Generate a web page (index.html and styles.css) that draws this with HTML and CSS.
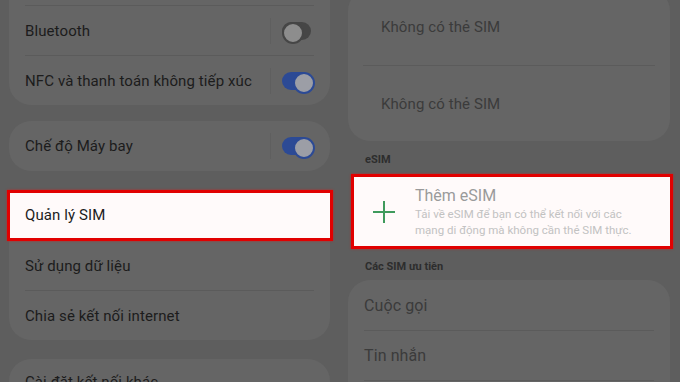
FILE: index.html
```html
<!DOCTYPE html>
<html lang="vi">
<head>
<meta charset="UTF-8">
<meta name="viewport" content="width=device-width, initial-scale=1.0">
<title>Quản lý SIM</title>
<link rel="stylesheet" href="styles.css">
</head>
<body>
    <div class="screens">

        <section class="screen screen-left">
            <div class="list list-left">
                <div class="card">
                    <div class="row">
                        <span class="label"></span>
                        <div class="switch-wrap"><span class="switch on"></span></div>
                    </div>
                    <div class="row">
                        <span class="label">Bluetooth</span>
                        <div class="switch-wrap"><span class="switch"></span></div>
                    </div>
                    <div class="row">
                        <span class="label">NFC và thanh toán không tiếp xúc</span>
                        <div class="switch-wrap"><span class="switch on"></span></div>
                    </div>
                </div>

                <div class="card">
                    <div class="row">
                        <span class="label">Chế độ Máy bay</span>
                        <div class="switch-wrap"><span class="switch on"></span></div>
                    </div>
                </div>

                <div class="card">
                    <div class="row highlight highlight-left">
                        <span class="label">Quản lý SIM</span>
                    </div>
                    <div class="row">
                        <span class="label">Sử dụng dữ liệu</span>
                    </div>
                    <div class="row">
                        <span class="label">Chia sẻ kết nối internet</span>
                    </div>
                </div>

                <div class="card">
                    <div class="row row-last">
                        <span class="label">Cài đặt kết nối khác</span>
                    </div>
                </div>
            </div>
        </section>

        <section class="screen screen-right">
            <div class="list list-right">
                <div class="card">
                    <div class="row row-sim">
                        <span class="label">Không có thẻ SIM</span>
                    </div>
                    <div class="row row-sim">
                        <span class="label">Không có thẻ SIM</span>
                    </div>
                </div>

                <h3 class="section-title section-esim">eSIM</h3>

                <div class="card card-esim highlight highlight-right">
                    <svg class="plus" width="22" height="22" viewBox="0 0 22 22">
                        <path d="M11 0v22M0 11h22" stroke="#3f9a5c" stroke-width="2" fill="none"/>
                    </svg>
                    <div class="esim-text">
                        <div class="esim-title">Thêm eSIM</div>
                        <div class="esim-desc">Tải về eSIM để bạn có thể kết nối với các mạng di động mà không cần thẻ SIM thực.</div>
                    </div>
                </div>

                <h3 class="section-title section-pref">Các SIM ưu tiên</h3>

                <div class="card">
                    <div class="row">
                        <span class="label dim">Cuộc gọi</span>
                    </div>
                    <div class="row">
                        <span class="label dim">Tin nhắn</span>
                    </div>
                    <div class="row"></div>
                </div>
            </div>
        </section>

    </div>
</body>
</html>
```

FILE: styles.css
```css
    :root {
        --bg: #5e5e5e;
        --card: #656565;
        --line: #5b5b5b;
        --text: #1c1c1c;
        --muted: #3b3b3b;
        --red: #e10000;
    }
    * {
        box-sizing: border-box;
    }
    html, body {
        margin: 0;
        height: 100%;
    }
    body {
        background: var(--bg);
        font-family: Roboto, "Noto Sans", "Liberation Sans", sans-serif;
        overflow: hidden;
    }
    .screens {
        display: flex;
        width: 680px;
        height: 382px;
        overflow: hidden;
    }
    .screen {
        width: 340px;
        flex: none;
    }
    .screen-left {
        padding: 0 10px 0 9px;
    }
    .screen-right {
        padding: 0 10px 0 8px;
    }
    .list {
        display: flex;
        flex-direction: column;
    }
    .list-left {
        margin-top: -45px;
        gap: 16px;
    }
    .list-left .card + .card + .card {
        margin-top: 3px;
    }
    .list-right {
        margin-top: -11px;
    }
    .card {
        background: var(--card);
        border-radius: 22px;
    }
    .row {
        height: 50px;
        margin: 0 16px;
        display: flex;
        align-items: center;
        justify-content: space-between;
    }
    .row + .row {
        border-top: 1px solid var(--line);
    }
    .row-last {
        align-items: flex-start;
        padding-top: 14px;
    }
    .label {
        font-size: 15px;
        color: var(--text);
        letter-spacing: 0.1px;
    }
    .label.dim {
        font-size: 16px;
        color: var(--muted);
    }
    .switch-wrap {
        display: flex;
        align-items: center;
        height: 26px;
        padding-left: 11px;
        margin-right: 3px;
        border-left: 1px solid #5f5f5f;
    }
    .switch {
        display: block;
        width: 29px;
        height: 18px;
        border-radius: 9px;
        background: #464646;
        position: relative;
    }
    .switch::after {
        content: "";
        position: absolute;
        top: 0;
        left: 0;
        width: 18px;
        height: 18px;
        border-radius: 50%;
        background: #8d8d8d;
        border: 2px solid #464646;
    }
    .switch.on {
        background: #2c4a95;
    }
    .switch.on::after {
        left: 11px;
        background: #9c9ea6;
        border-color: #2c4a95;
    }

    /* annotation boxes */
    .highlight {
        position: relative;
        z-index: 0;
    }
    .highlight::before {
        content: "";
        position: absolute;
        z-index: -1;
        background: #fffafa;
        border: 3px solid var(--red);
        box-shadow: 0 0 2px rgba(255, 0, 0, .6);
    }
    .highlight-left::before {
        top: 0;
        bottom: -1px;
        left: -18px;
        right: -19px;
    }
    .highlight-right::before {
        top: -1px;
        bottom: -1px;
        left: 3px;
        right: -3px;
    }

    /* right screen */
    .row-sim {
        height: 76px;
        margin: 0 15px;
    }
    .row-sim .label {
        padding-left: 18px;
        color: var(--muted);
    }
    .section-title {
        margin: 0;
        padding: 12px 0 0 17px;
        font-size: 11px;
        line-height: 14px;
        font-weight: bold;
        color: #2d2d2d;
    }
    .section-esim {
        padding-bottom: 8px;
    }
    .section-pref {
        padding-bottom: 6px;
    }
    .card-esim {
        height: 73px;
        display: flex;
        align-items: center;
        padding-left: 25px;
        background: transparent;
        border-radius: 0;
    }
    .plus {
        flex: none;
    }
    .esim-text {
        padding-left: 20px;
    }
    .esim-title {
        font-size: 16px;
        color: #9a9a9a;
        line-height: 20px;
    }
    .esim-desc {
        max-width: 222px;
        font-size: 11.5px;
        line-height: 16px;
        color: #c2c2c2;
    }
```
